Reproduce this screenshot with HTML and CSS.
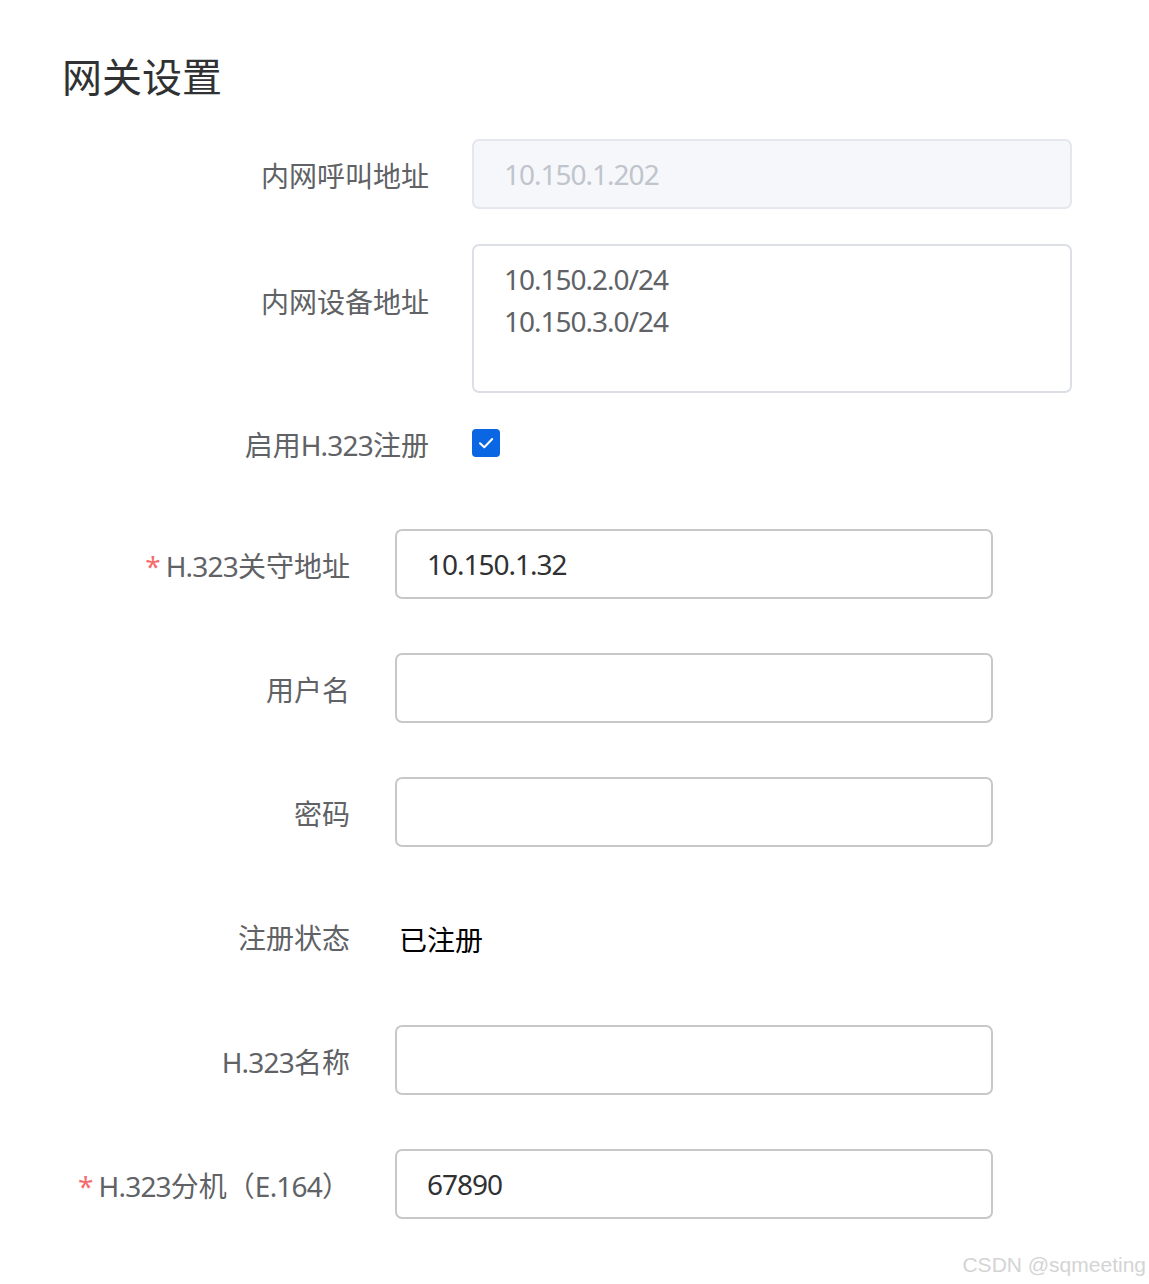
FILE: index.html
```html
<!DOCTYPE html>
<html lang="zh-CN">
<head>
<meta charset="utf-8">
<title>网关设置</title>
<link rel="stylesheet" href="styles.css">
</head>
<body>
<div class="page">
  <h1 class="title">网关设置</h1>

  <div class="form form-a">
    <div class="row">
      <div class="label">内网呼叫地址</div>
      <div class="control">
        <input class="input input-disabled" value="10.150.1.202" disabled>
      </div>
    </div>
    <div class="row row-textarea">
      <div class="label label-top">内网设备地址</div>
      <div class="control">
        <textarea class="textarea">10.150.2.0/24
10.150.3.0/24</textarea>
      </div>
    </div>
    <div class="row row-check">
      <div class="label">启用<span class="lat">H.323</span>注册</div>
      <div class="control">
        <span class="checkbox">
          <svg width="28" height="28" viewBox="0 0 28 28"><path d="M8 14.2 L12.3 18.3 L20.2 10" fill="none" stroke="#fff" stroke-width="2" stroke-linecap="round" stroke-linejoin="round"/></svg>
        </span>
      </div>
    </div>
  </div>

  <div class="form form-b">
    <div class="row">
      <div class="label"><span class="req">*</span><span class="lat">H.323</span>关守地址</div>
      <div class="control"><input class="input" value="10.150.1.32"></div>
    </div>
    <div class="row">
      <div class="label">用户名</div>
      <div class="control"><input class="input" value=""></div>
    </div>
    <div class="row">
      <div class="label">密码</div>
      <div class="control"><input class="input" type="password" value=""></div>
    </div>
    <div class="row">
      <div class="label">注册状态</div>
      <div class="control"><span class="status">已注册</span></div>
    </div>
    <div class="row">
      <div class="label"><span class="lat">H.323</span>名称</div>
      <div class="control"><input class="input" value=""></div>
    </div>
    <div class="row">
      <div class="label"><span class="req">*</span><span class="lat">H.323</span>分机（<span class="lat">E.164</span>）</div>
      <div class="control"><input class="input" value="67890"></div>
    </div>
  </div>
</div>
<div class="watermark">CSDN @sqmeeting</div>
</body>
</html>
```

FILE: styles.css
```css
html, body {
  margin: 0;
  padding: 0;
  background: #ffffff;
}

body {
  font-family: "Noto Sans", "Noto Sans CJK SC", sans-serif;
  width: 1149px;
  height: 1284px;
  position: relative;
  overflow: hidden;
}

.page {
  padding-top: 49px;
}

.title {
  margin: 0 0 0 62px;
  font-size: 40px;
  line-height: 56px;
  font-weight: 400;
  color: #303133;
}

.form-a {
  margin-top: 34px;
}

.row {
  display: flex;
  align-items: flex-start;
  height: 70px;
}

.label {
  box-sizing: border-box;
  text-align: right;
  font-size: 28px;
  line-height: 70px;
  padding-top: 2px;
  color: #606266;
  white-space: nowrap;
}

.lat {
  letter-spacing: -0.8px;
}

.form-a .label {
  width: 429px;
}

.form-a .control {
  margin-left: 43px;
  width: 600px;
}

.form-a .row {
  margin-bottom: 35px;
}

.form-a .row-textarea {
  height: 149px;
  margin-bottom: 15px;
}

.form-a .row-check {
  margin-bottom: 0;
}

.label-top {
  line-height: 42px;
  padding-top: 37px;
}

.form-b {
  margin-top: 51px;
  display: flex;
  flex-direction: column;
  gap: 54px;
}

.form-b .label {
  width: 350px;
}

.form-b .control {
  margin-left: 45px;
  width: 598px;
}

.input {
  box-sizing: border-box;
  display: block;
  width: 100%;
  height: 70px;
  margin: 0;
  padding: 0 0 0 30px;
  border: 2px solid #c8c8ca;
  border-radius: 7px;
  background: #ffffff;
  font-family: "Noto Sans", "Noto Sans CJK SC", sans-serif;
  font-size: 28px;
  letter-spacing: -1px;
  color: #303133;
  outline: none;
}

.input-disabled {
  border: 2px solid #e4e7ed;
  background: #f5f7fa;
  color: #c0c4cc;
  -webkit-text-fill-color: #c0c4cc;
  opacity: 1;
}

.textarea {
  box-sizing: border-box;
  display: block;
  width: 100%;
  height: 149px;
  margin: 0;
  padding: 12px 0 0 30px;
  border: 2px solid #dcdfe6;
  border-radius: 7px;
  font-family: "Noto Sans", "Noto Sans CJK SC", sans-serif;
  font-size: 28px;
  letter-spacing: -1px;
  line-height: 42px;
  color: #606266;
  resize: none;
  outline: none;
}

.row-check .control {
  display: flex;
  align-items: center;
  height: 70px;
}

.checkbox {
  display: block;
  width: 28px;
  height: 28px;
  border-radius: 4px;
  background: #0b66e4;
}

.checkbox svg {
  display: block;
}

.req {
  color: #f56c6c;
  margin-right: 5px;
}

.status {
  display: block;
  padding-left: 4px;
  padding-top: 4px;
  font-size: 28px;
  line-height: 70px;
  color: #000000;
}

.watermark {
  position: absolute;
  right: 3px;
  bottom: 7px;
  font-family: "Liberation Sans", Arial, sans-serif;
  font-size: 21px;
  color: #d4d4d4;
}
```
